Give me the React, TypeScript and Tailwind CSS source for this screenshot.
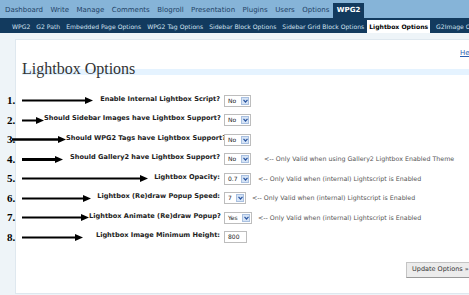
import React from "react";

const TOP_NAV = ["Dashboard", "Write", "Manage", "Comments", "Blogroll", "Presentation", "Plugins", "Users", "Options"];
const SUB_NAV = ["WPG2", "G2 Path", "Embedded Page Options", "WPG2 Tag Options", "Sidebar Block Options", "Sidebar Grid Block Options"];

type Row = {
  num: string;
  label: string;
  arrow: { ml: string; width: number; thick: number };
  value: string;
  kind: "select" | "input";
  boxWidth: string;
  note?: string;
  noteMl?: string;
};

const ROWS: Row[] = [
  { num: "1.", label: "Enable Internal Lightbox Script?", arrow: { ml: "ml-0", width: 71, thick: 2 }, value: "No", kind: "select", boxWidth: "w-[27px]" },
  { num: "2.", label: "Should Sidebar Images have Lightbox Support?", arrow: { ml: "ml-0", width: 22, thick: 2 }, value: "No", kind: "select", boxWidth: "w-[27px]" },
  { num: "3.", label: "Should WPG2 Tags have Lightbox Support?", arrow: { ml: "-ml-[10px]", width: 54, thick: 2.5 }, value: "No", kind: "select", boxWidth: "w-[27px]" },
  { num: "4.", label: "Should Gallery2 have Lightbox Support?", arrow: { ml: "ml-0", width: 41, thick: 3 }, value: "No", kind: "select", boxWidth: "w-[27px]", note: "<-- Only Valid when using Gallery2 Lightbox Enabled Theme", noteMl: "ml-[13px]" },
  { num: "5.", label: "Lightbox Opacity:", arrow: { ml: "ml-0", width: 126, thick: 2 }, value: "0.7", kind: "select", boxWidth: "w-[27px]", note: "<-- Only Valid when (internal) Lightscript is Enabled", noteMl: "ml-[7px]" },
  { num: "6.", label: "Lightbox (Re)draw Popup Speed:", arrow: { ml: "ml-0", width: 69, thick: 2 }, value: "7", kind: "select", boxWidth: "w-[22px]", note: "<-- Only Valid when (internal) Lightscript is Enabled", noteMl: "ml-[6px]" },
  { num: "7.", label: "Lightbox Animate (Re)draw Popup?", arrow: { ml: "ml-0", width: 67, thick: 2 }, value: "Yes", kind: "select", boxWidth: "w-[28px]", note: "<-- Only Valid when (internal) Lightscript is Enabled", noteMl: "ml-[6px]" },
  { num: "8.", label: "Lightbox Image Minimum Height:", arrow: { ml: "ml-0", width: 61, thick: 2 }, value: "800", kind: "input", boxWidth: "w-[23px]" },
];

function Arrow({ width, thick }: { width: number; thick: number }) {
  return (
    <svg width={width} height={9} viewBox={`0 0 ${width} 9`} className="shrink-0">
      <rect x={0} y={4.5 - thick / 2} width={width - 6} height={thick} fill="#000" />
      <polygon points={`${width - 8},1 ${width},4.5 ${width - 8},8`} fill="#000" />
    </svg>
  );
}

function FakeSelect({ value, boxWidth }: { value: string; boxWidth: string }) {
  return (
    <div className={`flex h-[12px] ${boxWidth} items-center justify-between border border-[#bdbdbd] bg-white pl-[3px] pr-[1px]`}>
      <span className="text-[6px] leading-none text-[#222]">{value}</span>
      <span className="flex h-[8px] w-[8px] items-center justify-center border border-[#a9c0e0] bg-[#d6e4f6]">
        <svg width="5" height="4" viewBox="0 0 5 4">
          <path d="M0.5 0.8 L2.5 3 L4.5 0.8" stroke="#2a55a0" strokeWidth="1.2" fill="none" />
        </svg>
      </span>
    </div>
  );
}

export default function App() {
  return (
    <div className="h-[295px] w-full overflow-hidden bg-[#eef4f8] font-['DejaVu_Sans',sans-serif]">
      {/* Top admin menu */}
      <div className="flex h-[18px] items-end whitespace-nowrap bg-[#86b4d8] pl-[5px] text-[7px] text-[#1f4266]">
        {TOP_NAV.map((item) => (
          <span key={item} className="mr-[7.5px] flex h-[15px] items-center">
            {item}
          </span>
        ))}
        <span className="-ml-[4px] flex h-[15px] items-center bg-[#123a5e] px-[4px] font-bold text-white">WPG2</span>
      </div>

      {/* Submenu */}
      <div className="flex h-[15px] items-end whitespace-nowrap bg-[#123a5e] pl-[12px] text-[6.1px] text-[#cfe0ef]">
        {SUB_NAV.map((item) => (
          <span key={item} className="mr-[6px] flex h-[13px] items-center">
            {item}
          </span>
        ))}
        <span className="-ml-[3px] flex h-[13px] items-center bg-white px-[2px] font-bold text-black">Lightbox Options</span>
        <span className="ml-[6px] flex h-[13px] items-center">G2Image Options</span>
      </div>

      {/* Content panel */}
      <div className="ml-[15px] mt-[6px] h-[255px] w-[520px] border border-[#dfe8ef] bg-white">
        <div className="h-[12px] pl-[444px] pt-[10px] text-[7px] leading-none text-[#2a5fb0] underline">Help</div>

        <h2 className="ml-[6px] mt-[17px] border-b-[6px] border-[#e5f3ff] font-['Liberation_Serif',serif] text-[16px] leading-[0px] text-[#333]">
          Lightbox Options
        </h2>

        <div className="-ml-[9px] mt-[16px]">
          {ROWS.map((row) => (
            <div key={row.num} className="flex h-[19.5px] items-center">
              <div className="flex w-[213px] items-center">
                <span className="w-[15px] shrink-0 font-['Liberation_Serif',serif] text-[11px] font-bold leading-none text-black">
                  {row.num}
                </span>
                <span className={row.arrow.ml}>
                  <Arrow width={row.arrow.width} thick={row.arrow.thick} />
                </span>
                <span className="mb-[3px] ml-auto whitespace-nowrap text-right text-[6.6px] font-bold leading-none text-[#222]">
                  {row.label}
                </span>
              </div>
              <div className="ml-[4px]">
                {row.kind === "select" ? (
                  <FakeSelect value={row.value} boxWidth={row.boxWidth} />
                ) : (
                  <div className={`flex h-[12px] ${row.boxWidth} items-center border border-[#bdbdbd] bg-white pl-[3px] text-[6px] leading-none text-[#222]`}>
                    {row.value}
                  </div>
                )}
              </div>
              {row.note && (
                <span className={`${row.noteMl} whitespace-nowrap text-[6.3px] leading-none text-[#555]`}>{row.note}</span>
              )}
            </div>
          ))}
        </div>

        <div className="mt-[15px] pl-[390px]">
          <button
            type="button"
            className="flex h-[16px] items-center whitespace-nowrap border border-[#c4c4c4] border-b-[#999] border-r-[#999] bg-[#ececec] px-[5px] text-[6.5px] text-[#333]"
          >
            Update Options &raquo;
          </button>
        </div>
      </div>
    </div>
  );
}
